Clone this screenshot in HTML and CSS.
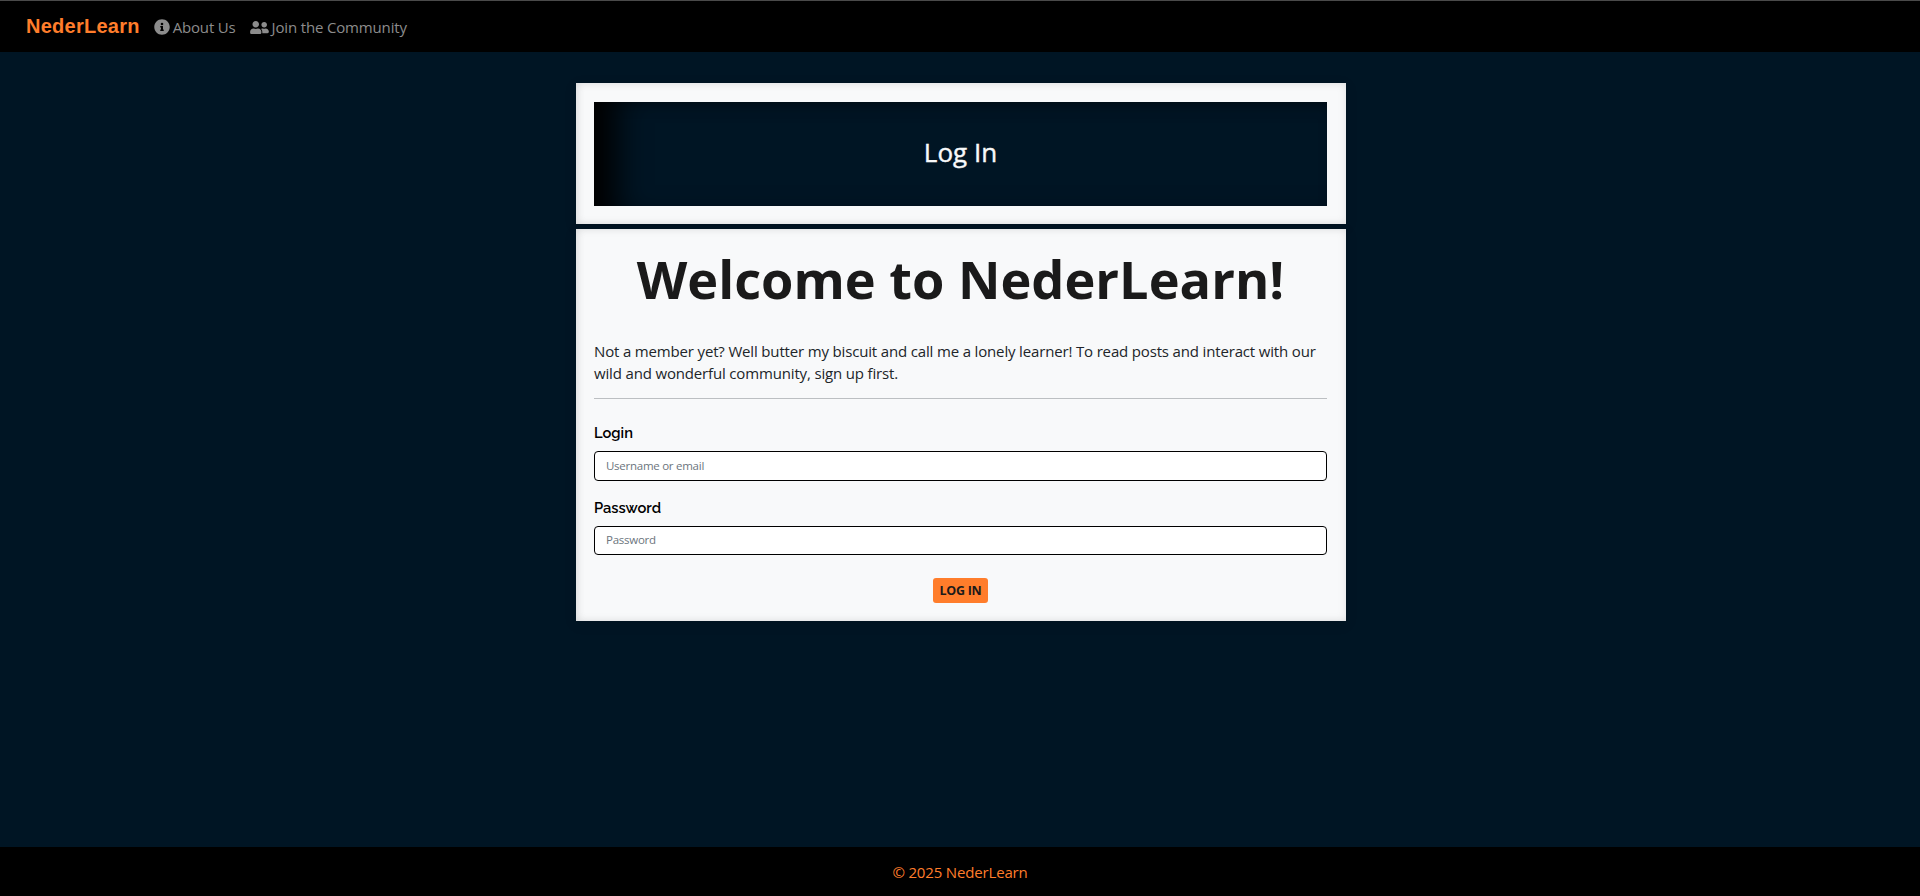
FILE: index.html
```html
<!DOCTYPE html>
<html lang="en">
<head>
<meta charset="utf-8">
<title>NederLearn</title>
<link rel="stylesheet" href="styles.css">
</head>
<body>
<nav class="navbar">
  <a class="brand">NederLearn</a>
  <a class="nav-link about"><svg class="icon-info" viewBox="0 0 512 512"><path d="M256 8C119 8 8 119 8 256s111 248 248 248 248-111 248-248S393 8 256 8zm0 110a42 42 0 1 1 0 84 42 42 0 0 1 0-84zm56 254c0 7-5 12-12 12h-88c-7 0-12-5-12-12v-24c0-7 5-12 12-12h12v-64h-12c-7 0-12-5-12-12v-24c0-7 5-12 12-12h64c7 0 12 5 12 12v100h12c7 0 12 5 12 12z"/></svg><span>About Us</span></a>
  <a class="nav-link join"><svg class="icon-users" viewBox="0 0 640 512"><path d="M192 256c62 0 112-50 112-112S254 32 192 32 80 82 80 144s50 112 112 112zm77 32h-8c-21 10-44 16-69 16s-48-6-69-16h-8C51 288 0 339 0 403v29c0 26 22 48 48 48h288c26 0 48-22 48-48v-29c0-64-51-115-115-115zm211-32c53 0 96-43 96-96s-43-96-96-96-96 43-96 96 43 96 96 96zm48 32h-4c-14 5-29 8-44 8s-30-3-44-8h-4c-20 0-39 6-56 16 25 27 40 62 40 102v38c0 2 0 4-1 4h177c27 0 48-21 48-48 0-62-50-112-112-112z"/></svg><span>Join the Community</span></a>
</nav>
<main class="content">
  <section class="card title-card">
    <div class="masthead"><h2>Log In</h2></div>
  </section>
  <section class="card form-card">
    <h1>Welcome to NederLearn!</h1>
    <p class="intro">Not a member yet? Well butter my biscuit and call me a lonely learner! To read posts and interact with our wild and wonderful community, sign up first.</p>
    <hr>
    <form>
      <label class="label-login" for="login">Login</label>
      <input id="login" type="text" placeholder="Username or email">
      <label class="label-password" for="password">Password</label>
      <input id="password" type="password" placeholder="Password">
      <button type="button">LOG IN</button>
    </form>
  </section>
</main>
<footer class="footer"><span>© 2025 NederLearn</span></footer>
</body>
</html>
```
FILE: styles.css
```css
* { box-sizing: border-box; }

body {
  margin: 0;
  height: 896px;
  display: flex;
  flex-direction: column;
  overflow: hidden;
  background: #001524;
  font-family: "Open Sans", sans-serif;
  font-size: 15px;
  line-height: 22px;
  letter-spacing: -0.16px;
  color: #212529;
}

.navbar {
  height: 52px;
  flex: none;
  display: flex;
  align-items: center;
  padding: 2px 26px 0;
  border-top: 1px solid #4a4a4a;
  background: #000;
}

.brand {
  color: #ff7d2b;
  font: bold 20px/30px "Liberation Sans", sans-serif;
  letter-spacing: 0.25px;
  margin-top: -3px;
}

.nav-link {
  display: flex;
  align-items: center;
  color: #8c8c8c;
}

.nav-link span { margin-top: -2px; }
.nav-link svg { fill: currentColor; margin-top: -1px; }
.about { margin-left: 14px; gap: 3px; }
.join { margin-left: 14px; gap: 3px; }
.icon-info { width: 16px; height: 16px; }
.icon-users { width: 19px; height: 15px; }

.content {
  width: 770px;
  margin: 31px 0 0 576px;
  flex: 1;
}

.card {
  background: #f8f9fa;
  padding: 19px 19px 18px 18px;
  box-shadow: inset 3px 0 8px -2px rgba(0, 0, 0, .08), inset 0 0 10px rgba(0, 0, 0, .08), 0 3px 12px rgba(0, 0, 0, .1);
}

.title-card { height: 141px; }

.masthead {
  height: 104px;
  display: flex;
  align-items: center;
  justify-content: center;
  padding-bottom: 4px;
  background: #001524;
  box-shadow: inset 40px 0 32px -18px #000, inset 0 8px 14px -6px rgba(0, 0, 0, .35);
}

h2 {
  margin: 0;
  color: #f8f9fa;
  font-size: 26px;
  font-weight: 500;
  line-height: 32px;
  letter-spacing: 0;
  -webkit-text-stroke: 0.4px #f8f9fa;
}

.form-card {
  height: 392px;
  margin-top: 5px;
}

h1 {
  margin: 0;
  color: #1a1a1a;
  font-size: 52.3px;
  line-height: 62px;
  font-weight: 700;
  letter-spacing: 0;
  text-align: center;
}

.intro {
  height: 44px;
  margin: 30px 0 0;
}

hr {
  height: 1px;
  margin: 14px 0 0;
  border: 0;
  background: #bcbfc2;
}

form {
  display: flex;
  flex-direction: column;
}

label {
  color: #000;
  font-family: Raleway, Lato, sans-serif;
  font-size: 14.7px;
  font-weight: 600;
  line-height: 22px;
  letter-spacing: 0;
}

.label-login { margin-top: 23px; }
.label-password { margin-top: 16px; }

input {
  height: 30px;
  margin: 7px 0 0;
  padding: 0 11px 1px;
  border: 1px solid #000;
  border-radius: 4px;
  background: #fff;
  font: 11.5px "Open Sans", sans-serif;
  letter-spacing: -0.26px;
}

#password {
  height: 29px;
  padding-bottom: 2px;
}

input::placeholder { color: #6c757d; }

button {
  align-self: center;
  width: 55px;
  height: 25px;
  margin-top: 23px;
  padding: 0;
  border: 0;
  border-radius: 3px;
  background: #ff7d2b;
  color: #1a1a1a;
  font: 700 12.5px/25px "Open Sans", sans-serif;
  letter-spacing: -0.3px;
}

.footer {
  height: 49px;
  flex: none;
  display: flex;
  align-items: center;
  justify-content: center;
  padding-top: 1px;
  background: #000;
  color: #ff7d2b;
}
```
